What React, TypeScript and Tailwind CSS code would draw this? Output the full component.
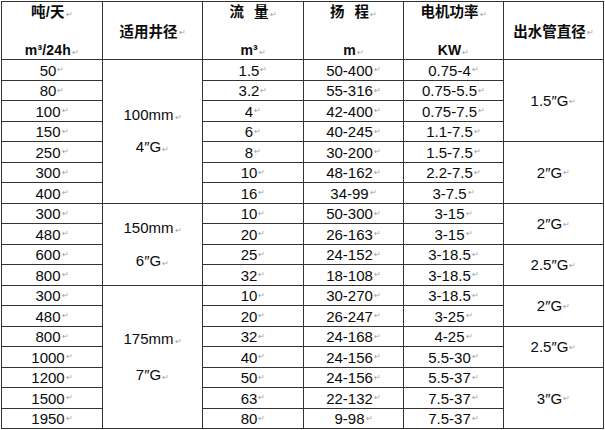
import React from 'react';

type Row = { flow: string; q: string; head: string; power: string };

const rows: Row[] = [
  { flow: '50', q: '1.5', head: '50-400', power: '0.75-4' },
  { flow: '80', q: '3.2', head: '55-316', power: '0.75-5.5' },
  { flow: '100', q: '4', head: '42-400', power: '0.75-7.5' },
  { flow: '150', q: '6', head: '40-245', power: '1.1-7.5' },
  { flow: '250', q: '8', head: '30-200', power: '1.5-7.5' },
  { flow: '300', q: '10', head: '48-162', power: '2.2-7.5' },
  { flow: '400', q: '16', head: '34-99', power: '3-7.5' },
  { flow: '300', q: '10', head: '50-300', power: '3-15' },
  { flow: '480', q: '20', head: '26-163', power: '3-15' },
  { flow: '600', q: '25', head: '24-152', power: '3-18.5' },
  { flow: '800', q: '32', head: '18-108', power: '3-18.5' },
  { flow: '300', q: '10', head: '30-270', power: '3-18.5' },
  { flow: '480', q: '20', head: '26-247', power: '3-25' },
  { flow: '800', q: '32', head: '24-168', power: '4-25' },
  { flow: '1000', q: '40', head: '24-156', power: '5.5-30' },
  { flow: '1200', q: '50', head: '24-156', power: '5.5-37' },
  { flow: '1500', q: '63', head: '22-132', power: '7.5-37' },
  { flow: '1950', q: '80', head: '9-98', power: '7.5-37' },
];

// merged cells in the "well size" column, keyed by the row they start on
const wells: Record<number, { span: string; gap: string; mm: string; g: string }> = {
  0: { span: 'row-span-7', gap: 'gap-[16px]', mm: '100mm', g: '4″G' },
  7: { span: 'row-span-4', gap: 'gap-[17px]', mm: '150mm', g: '6″G' },
  11: { span: 'row-span-7', gap: 'gap-[20px]', mm: '175mm', g: '7″G' },
};

// merged cells in the outlet pipe column
const outlets: Record<number, { span: string; label: string }> = {
  0: { span: 'row-span-4', label: '1.5″G' },
  4: { span: 'row-span-3', label: '2″G' },
  7: { span: 'row-span-2', label: '2″G' },
  9: { span: 'row-span-2', label: '2.5″G' },
  11: { span: 'row-span-2', label: '2″G' },
  13: { span: 'row-span-2', label: '2.5″G' },
  15: { span: 'row-span-3', label: '3″G' },
};

function Mark() {
  return <span className="ml-[1px] text-[8px] leading-none text-[#a0a0a0] font-normal">↵</span>;
}

function Cell({ children }: { children: React.ReactNode }) {
  return (
    <div className="bg-white flex items-center justify-center pt-[1px] leading-none whitespace-nowrap">
      {children}
      <Mark />
    </div>
  );
}

function Gap() {
  return <span className="inline-block w-[10px]" />;
}

export default function App() {
  return (
    <div className="w-[605px] h-[430px] overflow-hidden bg-white pt-px pl-px">
      <div
        className="grid w-fit bg-[#333] p-px gap-px text-[15px] text-[#0a0a0a]"
        style={{ fontFamily: '"Liberation Sans", Arial, "Noto Sans CJK SC", sans-serif' }}
      >
        <div className="grid grid-cols-[100px_99px_100px_99px_99px_99px] grid-rows-[57px_repeat(18,19.5px)] gap-px">
          {/* header */}
          <div className="bg-white flex flex-col items-center pt-px gap-[19px] font-bold leading-[19px] text-[14px] tracking-[0.2px]">
            <div className="text-[14.5px]">吨/天<Mark /></div>
            <div>m³/24h<Mark /></div>
          </div>
          <div className="bg-white flex items-center justify-center pt-[4px] font-bold text-[14.5px]">
            适用井径<Mark />
          </div>
          <div className="bg-white flex flex-col items-center pt-px gap-[19px] font-bold leading-[19px] text-[14px]">
            <div className="text-[14.5px]">流<Gap />量<Mark /></div>
            <div>m³<Mark /></div>
          </div>
          <div className="bg-white flex flex-col items-center pt-px gap-[19px] font-bold leading-[19px] text-[14px]">
            <div className="text-[14.5px]">扬<Gap />程<Mark /></div>
            <div>m<Mark /></div>
          </div>
          <div className="bg-white flex flex-col items-center pt-px gap-[19px] font-bold leading-[19px] text-[14px]">
            <div className="text-[14.5px]">电机功率<Mark /></div>
            <div>KW<Mark /></div>
          </div>
          <div className="bg-white flex items-center justify-center pt-[4px] font-bold text-[14.5px]">
            出水管直径<Mark />
          </div>

          {/* body */}
          {rows.map((r, i) => (
            <React.Fragment key={i}>
              <Cell>{r.flow}</Cell>
              {wells[i] && (
                <div
                  className={`bg-white flex flex-col items-center justify-center leading-[16px] ${wells[i].span} ${wells[i].gap}`}
                >
                  <div>{wells[i].mm}<Mark /></div>
                  <div>{wells[i].g}<Mark /></div>
                </div>
              )}
              <Cell>{r.q}</Cell>
              <Cell>{r.head}</Cell>
              <Cell>{r.power}</Cell>
              {outlets[i] && (
                <div className={`bg-white flex items-center justify-center pt-[2px] ${outlets[i].span}`}>
                  {outlets[i].label}
                  <Mark />
                </div>
              )}
            </React.Fragment>
          ))}
        </div>
      </div>
    </div>
  );
}
